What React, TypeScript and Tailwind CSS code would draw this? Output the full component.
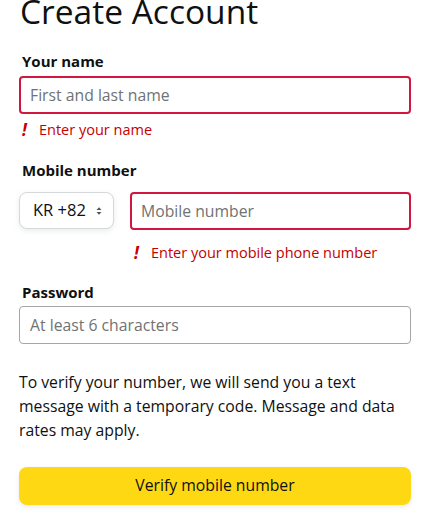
const ErrorLine = ({ text, className = "" }: { text: string; className?: string }) => (
  <div className={`flex items-center text-[14.5px] leading-[20px] text-[#c40000] ${className}`}>
    <span className="font-bold italic text-[17px] w-[19px] pl-[2px]">!</span>
    <span>{text}</span>
  </div>
);

const inputBase =
  "w-full h-[38px] rounded-[4px] px-[9px] text-[15.75px] text-[#0f1111] placeholder:text-[#6f7373] outline-none";

const App = () => {
  return (
    <div className="min-h-svh bg-white px-[19px] text-[#0f1111] font-['Open_Sans',Arial,sans-serif] overflow-hidden">
      <h1 className="text-[33.5px] leading-[40px] font-normal -mt-[9px] ml-px">Create Account</h1>

      <label className="block text-[15px] font-bold mt-[20px] ml-[3px] leading-[20px]">Your name</label>
      <input
        placeholder="First and last name"
        className={`${inputBase} mt-[5px] border-2 border-[#d1173f]`}
      />
      <ErrorLine text="Enter your name" className="mt-[6px] ml-[1px]" />

      <label className="block text-[15px] font-bold mt-[20px] ml-[3px] leading-[20px]">Mobile number</label>
      <div className="flex gap-[16px] mt-[12px]">
        <div>
          <button className="w-[95px] h-[37px] rounded-[8px] border border-[#d5d9d9] bg-white shadow-[0_2px_5px_rgba(213,217,217,0.5)] flex items-center pl-[13px] text-[16.5px] text-[#0f1111]">
            <span>KR +82</span>
            <svg width="8" height="12" viewBox="0 0 8 12" className="ml-[9px]">
              <path d="M1.5 5 L4 2.2 L6.5 5 Z" fill="#555" />
              <path d="M1.5 7 L4 9.8 L6.5 7 Z" fill="#555" />
            </svg>
          </button>
        </div>
        <div className="flex-1 flex flex-col">
          <input
            placeholder="Mobile number"
            className={`${inputBase} border-2 border-[#d1173f]`}
          />
          <ErrorLine text="Enter your mobile phone number" className="mt-[13px] ml-[2px]" />
        </div>
      </div>

      <label className="block text-[15px] font-bold mt-[19px] ml-[3px] leading-[20px]">Password</label>
      <input
        placeholder="At least 6 characters"
        className={`${inputBase} mt-[4px] border border-[#a6a6a6] px-[10px]`}
      />

      <p className="mt-[26px] text-[15.75px] leading-[24px]">
        To verify your number, we will send you a text message with a temporary code. Message and data rates may apply.
      </p>

      <button className="mt-[25px] w-full h-[38px] rounded-[8px] bg-[#ffd814] shadow-[0_2px_5px_rgba(213,217,217,0.5)] text-[15.75px] text-[#0f1111]">
        Verify mobile number
      </button>
    </div>
  );
};

export default App;
